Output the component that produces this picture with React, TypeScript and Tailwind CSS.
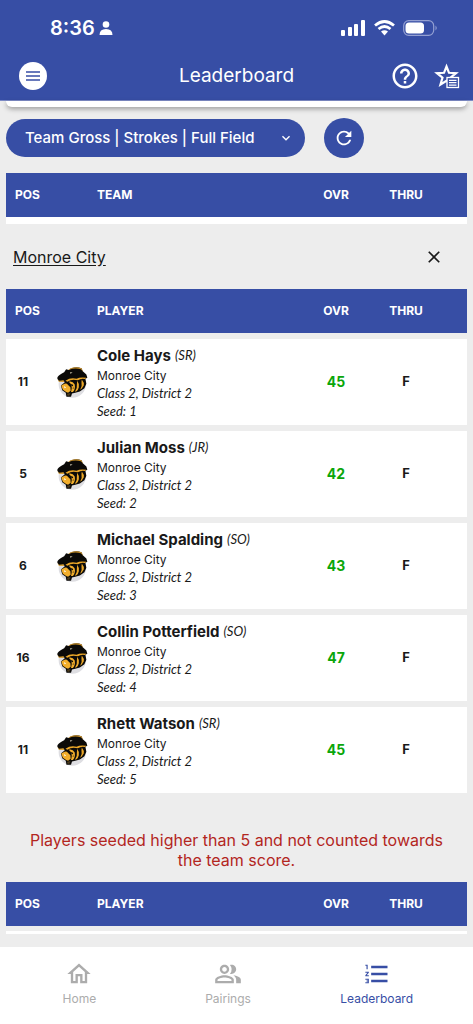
import { MdFormatListNumbered, MdHelpOutline, MdOutlineHome, MdOutlinePeopleAlt, MdRefresh, MdKeyboardArrowDown, MdClose, MdPerson } from 'react-icons/md'

const players = [
  { pos: 11, name: 'Cole Hays', year: 'SR', seed: 1, score: 45 },
  { pos: 5, name: 'Julian Moss', year: 'JR', seed: 2, score: 42 },
  { pos: 6, name: 'Michael Spalding', year: 'SO', seed: 3, score: 43 },
  { pos: 16, name: 'Collin Potterfield', year: 'SO', seed: 4, score: 47 },
  { pos: 11, name: 'Rhett Watson', year: 'SR', seed: 5, score: 45 },
]

const PantherLogo = () => (
  <svg viewBox="0 0 96 98" className="w-8 h-8" role="img" aria-label="Monroe City logo">
    <circle cx="49" cy="55" r="42" fill="#dedee2" />
    <path d="M3 38 C3 30 12 26 24 19 L30 10 L38 12 C48 3 64 1 77 7 L81 16 L92 26 L95 36 L89 39 L92 54 L86 68 L72 78 L58 82 L48 84 L45 94 L31 94 L29 82 L18 74 L14 60 L26 50 L22 45 L8 47 Z" fill="#0b0a08" />
    <path d="M38 10 Q56 -1 77 7 L82 17 L75 10 Q56 5 38 12 Z" fill="#c98f25" />
    <path d="M42 19 L50 20 L43 24 Z" fill="#d8d0b8" />
    <path d="M3 39 L8 45 L22 44 L24 49 L8 48 Z" fill="#d99b25" />
    <path d="M28 45 Q44 34 62 39 Q72 33 92 36 L88 40 Q76 37 66 44 Q48 38 34 48 Z" fill="#eba728" />
    <path d="M15 60 L25 54 Q32 52 36 58 L43 65 L44 76 L36 82 L30 80 L20 73 Z" fill="#f2ae2c" />
    <path d="M24 61 L30 66 L25 68 Z" fill="#fff" />
    <path d="M38 48 Q50 45 56 56 Q60 70 51 80 L45 80 L47 70 Q49 57 38 48 Z" fill="#f2ae2c" />
    <path d="M43 55 L50 57 L52 62 L47 61 Z M49 67 L54 66 L52 70 Z" fill="#0b0a08" />
    <path d="M64 45 Q71 54 69 65 Q67 73 62 77 L57 79 Q65 66 63 55 Z" fill="#eba728" />
    <path d="M78 41 Q86 50 84 60 L78 69 L73 73 Q80 62 77 49 Z" fill="#eba728" />
    <path d="M33 85 L43 83 L40 91 L34 91 Z" fill="#4c3b1c" />
  </svg>
)

const StatusBar = () => (
  <div className="flex h-14 items-center justify-between pl-[50px] pr-[35px]">
    <div className="flex items-center gap-1 text-xl font-semibold">
      8:36
      <svg viewBox="0 0 14 14" className="size-3.5" fill="currentColor" aria-hidden="true">
        <circle cx="7" cy="3.500" r="3.300" />
        <path d="M0.500 14 Q0.500 8 7 8 Q13.500 8 13.500 14 Z" />
      </svg>
    </div>
    <div className="flex items-center gap-2">
      <svg viewBox="0 0 25 16" className="h-4 w-[25px]" fill="currentColor" aria-hidden="true">
        <rect x="0" y="10" width="4" height="6" rx="1" />
        <rect x="7" y="7" width="4" height="9" rx="1" />
        <rect x="13" y="4" width="4" height="12" rx="1" />
        <rect x="20" y="0" width="4" height="16" rx="1" />
      </svg>
      <svg viewBox="0 0 21 16" className="h-4 w-[21px]" fill="none" stroke="currentColor" strokeWidth="2.8" aria-hidden="true">
        <path d="M1 5.5 Q10.500 -2.500 20 5.500" />
        <path d="M4.500 9 Q10.500 4 16.500 9" />
        <path d="M7 11.500 Q10.500 9 14 11.500 L10.500 15.500 Z" fill="currentColor" stroke="none" />
      </svg>
      <svg viewBox="0 0 35 16" className="h-4 w-[35px]" aria-hidden="true">
        <rect x="0.700" y="0.700" width="30" height="14.600" rx="5" fill="none" stroke="#94a0d2" strokeWidth="1.200" />
        <rect x="2.500" y="2.500" width="18.500" height="11" rx="3.500" fill="#fff" />
        <path d="M32.500 5.500 Q35 8 32.500 10.500 Z" fill="#94a0d2" />
      </svg>
    </div>
  </div>
)

const Header = () => (
  <header className="bg-[#374ea5] text-white border-b border-[#7d8bc6]">
    <StatusBar />
    <div className="grid grid-cols-[1fr_auto_1fr] items-center h-11 px-[19px] pb-1">
      <button aria-label="Menu" className="flex size-7 items-center justify-center rounded-full bg-white">
        <svg viewBox="0 0 14 10" className="h-[10px] w-[14px]" stroke="#374ea5" strokeWidth="1.500" aria-hidden="true">
          <path d="M0 1 H14 M0 5 H14 M0 9 H14" />
        </svg>
      </button>
      <h1 className="text-[19px]">Leaderboard</h1>
      <div className="-mr-1.5 flex items-center justify-end gap-3.5">
        <button aria-label="Help">
          <MdHelpOutline className="size-[30px]" />
        </button>
        <button aria-label="Favorites">
          <svg viewBox="0 0 26 26" className="size-[26px]" fill="none" stroke="currentColor" aria-hidden="true">
            <path d="M12.500 3.500 L15 9.800 L22 10.200 L16.500 14.600 L18.500 21.500 L12.500 17.700 L6.500 21.500 L8.500 14.600 L3 10.200 L10 9.800 Z" strokeWidth="2.200" />
            <rect x="13" y="14.500" width="11.500" height="10" fill="#374ea5" strokeWidth="1.300" />
            <path d="M15 17.300 H22.500 M15 19.700 H22.500 M15 22.100 H22.500" strokeWidth="1.200" />
          </svg>
        </button>
      </div>
    </div>
  </header>
)

const Columns = () => (
  <colgroup>
    <col className="w-[46px]" />
    <col className="w-[45px]" />
    <col />
    <col className="w-[70px]" />
    <col className="w-[70px]" />
    <col className="w-[26px]" />
  </colgroup>
)

const TableHead = ({ label }: { label: string }) => (
  <thead>
    <tr className="h-11 bg-[#374ea5] text-xs font-bold text-white">
      <th scope="col" className="pl-[9px] text-left">POS</th>
      <td />
      <th scope="col" className="text-left">{label}</th>
      <th scope="col">OVR</th>
      <th scope="col">THRU</th>
      <td />
    </tr>
  </thead>
)

const PlayerRow = ({ player }: { player: (typeof players)[number] }) => (
  <tr className="bg-white text-[13px]">
    <td className="pr-3 text-center text-xs font-bold">{player.pos}</td>
    <td className="pl-1">
      <PantherLogo />
    </td>
    <td className="pt-1.5 pb-[5px] whitespace-nowrap">
      <div className="flex h-[22px] items-center gap-1">
        <span className="text-[15px] font-bold">{player.name}</span>
        <span className="font-[Lato,sans-serif] text-[13px] italic">({player.year})</span>
      </div>
      <div className="text-xs leading-[17px]">Monroe City</div>
      <div className="font-[Lato,sans-serif] text-[13px] leading-[18px] italic">Class 2, District 2</div>
      <div className="font-[Lato,sans-serif] text-[13px] leading-[18px] italic">Seed: {player.seed}</div>
    </td>
    <td className="text-center text-sm font-bold text-[#0aa60a]">{player.score}</td>
    <td className="text-center font-bold">F</td>
    <td />
  </tr>
)

const BottomNav = () => (
  <nav className="mt-auto grid h-[77px] grid-cols-3 bg-white pl-[5px] pr-[22px] pt-[13px] text-xs text-[#acacac]">
    <a href="#home" className="flex flex-col items-center gap-[3px]">
      <MdOutlineHome className="size-7" />
      Home
    </a>
    <a href="#pairings" className="flex flex-col items-center gap-[3px]">
      <MdOutlinePeopleAlt className="size-7" />
      Pairings
    </a>
    <a href="#leaderboard" aria-current="page" className="flex flex-col items-center gap-[3px] text-[#374ea5]">
      <MdFormatListNumbered className="size-7" />
      Leaderboard
    </a>
  </nav>
)

const App = () => {
  return (
    <div className="flex min-h-screen flex-col bg-[#ededed] font-[Inter,sans-serif] text-[#191919]">
      <Header />
      <main className="px-1.5">
        <div className="h-1.5 rounded-b-md bg-white shadow-[0_2px_5px_rgba(0,0,0,0.35)]" />

        <div className="mt-[11px] flex items-center gap-[19px]">
          <div className="relative text-white">
            <select
              aria-label="Leaderboard view"
              className="h-[38px] w-[299px] appearance-none rounded-full bg-[#374ea5] pl-[19px] pr-9 text-[15px] font-medium"
            >
              <option>Team Gross | Strokes | Full Field</option>
            </select>
            <MdKeyboardArrowDown className="pointer-events-none absolute top-[11px] right-[11px] size-4" />
          </div>
          <button aria-label="Refresh" className="flex size-10 items-center justify-center rounded-full bg-[#374ea5] text-white">
            <MdRefresh className="size-[22px]" />
          </button>
        </div>

        <table className="mt-[15px] w-full table-fixed border-collapse">
          <Columns />
          <TableHead label="TEAM" />
        </table>
        <div className="h-[7px] bg-white" />

        <section>
          <div className="flex h-[59px] items-center justify-between pt-1.5 pl-[7px] pr-[23px]">
            <a href="#monroe-city" className="text-base underline underline-offset-2">Monroe City</a>
            <button aria-label="Close">
              <MdClose className="size-5" />
            </button>
          </div>
          <table className="w-full table-fixed border-separate border-spacing-x-0 border-spacing-y-1.5">
            <Columns />
            <TableHead label="PLAYER" />
            <tbody>
              {players.map((player) => (
                <PlayerRow key={player.name} player={player} />
              ))}
            </tbody>
          </table>
          <p className="mt-[31px] px-3 text-center text-base leading-5 text-[#b3261e]">
            Players seeded higher than 5 and not counted towards the team score.
          </p>
          <table className="mt-3 w-full table-fixed border-collapse">
            <Columns />
            <TableHead label="PLAYER" />
          </table>
          <div className="mt-[5px] mb-3 h-[3px] bg-white" />
        </section>
      </main>
      <BottomNav />
    </div>
  )
}

export default App
